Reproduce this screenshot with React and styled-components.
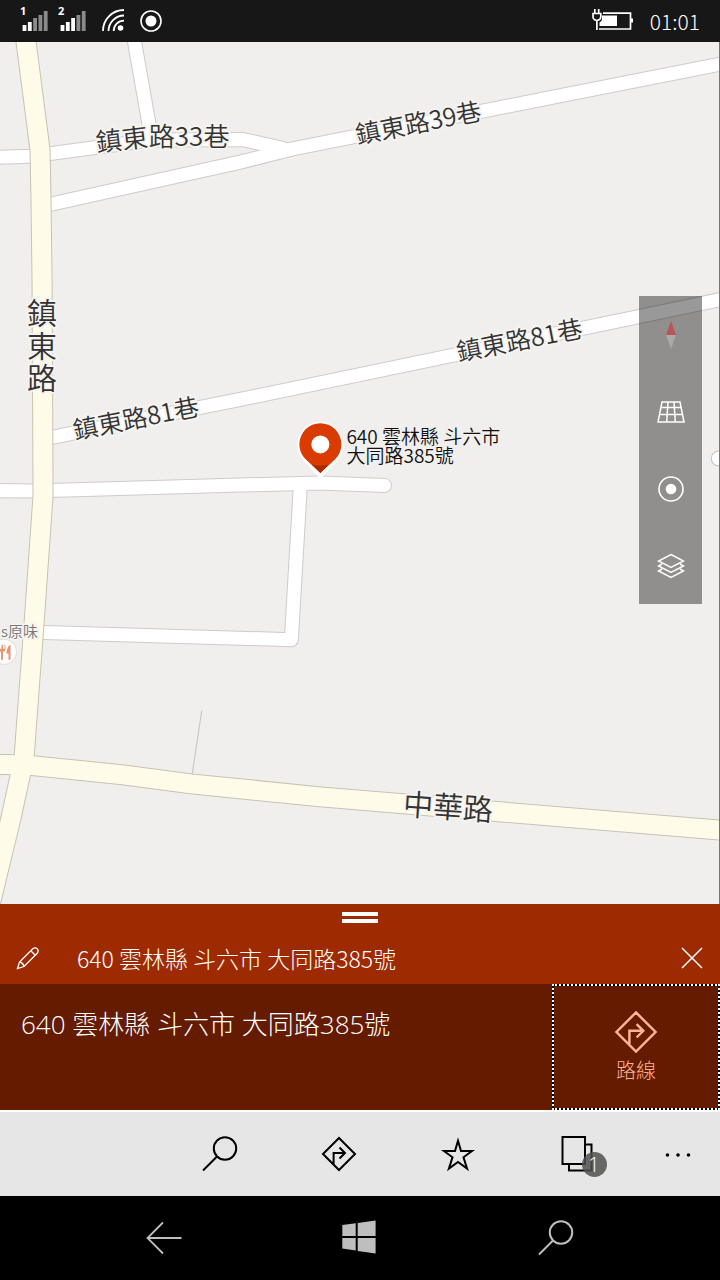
import styled, { createGlobalStyle } from 'styled-components';

const address = '640 雲林縣 斗六市 大同路385號';

const GlobalStyle = createGlobalStyle`
  * {
    box-sizing: border-box;
  }
  body {
    margin: 0;
    font-family: 'Noto Sans CJK TC', 'Noto Sans', sans-serif;
    font-weight: 300;
  }
  button {
    margin: 0;
    padding: 0;
    border: 0;
    background: none;
    color: inherit;
    font: inherit;
    cursor: pointer;
  }
  svg {
    display: block;
  }
`;

const Screen = styled.div`
  display: flex;
  flex-direction: column;
  min-height: 100vh;
  background: #fff;
`;

const StatusBar = styled.header`
  display: flex;
  align-items: center;
  justify-content: space-between;
  height: 42px;
  padding: 0 20px;
  background: #171717;
  color: #fff;
`;
const StatusGroup = styled.div`
  display: flex;
  align-items: center;
  gap: ${({ $gap }) => $gap}px;
`;
const Clock = styled.time`
  font-size: 21px;
  line-height: 24px;
`;
const SignalText = styled.text`
  font: 700 11px 'Open Sans', sans-serif;
  fill: #fff;
`;

const MapArea = styled.main`
  position: relative;
  flex: 1;
  min-height: 640px;
  overflow: hidden;
  border-right: 1px solid #757575;
  background: #f0efed;
`;
const MapCanvas = styled.svg`
  position: absolute;
  inset: 0;
  width: 100%;
  height: 100%;
`;
const RoadLabel = styled.text`
  font-size: ${({ $size }) => $size}px;
  font-weight: 350;
  fill: #333;
  stroke: #f5f4f0;
  stroke-width: 4px;
  stroke-linejoin: round;
  paint-order: stroke;
`;
const PinLabel = styled.text`
  font-size: 19px;
  font-weight: 350;
  fill: #111;
`;
const PlaceLabel = styled.text`
  font-size: 15px;
  font-weight: 350;
  fill: #777;
  stroke: #f5f4f0;
  stroke-width: 3px;
  paint-order: stroke;
`;
const MapTools = styled.div`
  position: absolute;
  top: 254px;
  right: 17px;
  display: flex;
  flex-direction: column;
  width: 63px;
  background: rgba(0, 0, 0, 0.4);
`;
const ToolButton = styled.button`
  display: flex;
  align-items: center;
  justify-content: center;
  height: 77px;
`;

const SearchHeader = styled.section`
  height: 80px;
  background: #9d2a00;
  color: #fff;
`;
const Handle = styled.button`
  display: flex;
  align-items: flex-start;
  justify-content: center;
  width: 100%;
  height: 30px;
  padding-top: 8px;
`;
const HandleBars = styled.span`
  width: 36px;
  height: 11px;
  border: solid #fff;
  border-width: 4px 0;
`;
const QueryRow = styled.div`
  display: flex;
  align-items: center;
  height: 48px;
`;
const RowIcon = styled.button`
  display: flex;
  align-items: center;
  justify-content: center;
  width: 56px;
  height: 48px;
`;
const Query = styled.button`
  flex: 1;
  padding-left: 21px;
  font-size: 23px;
  line-height: 32px;
  text-align: left;
`;

const Detail = styled.section`
  display: flex;
  min-height: 126px;
  background: #641b00;
  color: #fff;
`;
const Address = styled.h1`
  flex: 1;
  margin: 0;
  padding: 21px;
  font-family: 'Open Sans', 'Noto Sans CJK TC', sans-serif;
  font-size: 26px;
  font-weight: 300;
  line-height: 38px;
`;
const RouteButton = styled.button`
  display: flex;
  flex-direction: column;
  align-items: center;
  justify-content: center;
  gap: 2px;
  width: 168px;
  border: 2px dotted #fff;
  background: linear-gradient(#641b00, #641b00) padding-box, #000 border-box;
  color: #ffb294;
  font-size: 20px;
  line-height: 28px;
`;

const AppBar = styled.nav`
  display: flex;
  justify-content: flex-end;
  height: 84px;
  margin-top: 2px;
  background: #e6e6e6;
  color: #000;
`;
const AppBarButton = styled.button`
  display: flex;
  align-items: center;
  justify-content: center;
  width: ${({ $narrow }) => ($narrow ? 84 : 119)}px;
`;
const IconWithBadge = styled.span`
  position: relative;
`;
const Badge = styled.span`
  position: absolute;
  right: -12px;
  bottom: -5px;
  width: 25px;
  height: 25px;
  border-radius: 50%;
  background: rgba(80, 80, 80, 0.85);
  color: #fff;
  font-family: 'Open Sans', sans-serif;
  font-size: 20px;
  font-weight: 300;
  line-height: 26px;
  text-align: center;
`;

const SystemBar = styled.nav`
  display: flex;
  justify-content: center;
  height: 84px;
  background: #000;
  color: #bebebe;
`;
const SystemButton = styled.button`
  display: flex;
  align-items: center;
  justify-content: center;
  width: 196px;
`;

const barHeights = [6, 9, 13, 16, 20];

function Signal({ sim, level }) {
  return (
    <svg width="28" height="36" viewBox="0 0 28 36" fill="#fff">
      <SignalText x="0" y="12">{sim}</SignalText>
      {barHeights.map((h, i) => (
        <rect
          key={h}
          x={2.6 + i * 5.3}
          y={28 - h}
          width="3.8"
          height={h}
          fill={i < level ? '#fff' : '#8b8b8b'}
        />
      ))}
    </svg>
  );
}

function WifiIcon() {
  return (
    <svg width="22" height="24" viewBox="0 0 22 24" fill="none" stroke="#fff" strokeWidth="1.8">
      <path d="M1 22A21 21 0 0 1 22 1M6.500 22A15.500 15.500 0 0 1 22 6.500M11.700 22A10.300 10.300 0 0 1 22 11.700" />
      <circle cx="18.500" cy="19" r="2.800" fill="#fff" stroke="none" />
    </svg>
  );
}

function TargetIcon({ size, dot }) {
  const c = size / 2;
  return (
    <svg width={size} height={size} viewBox={`0 0 ${size} ${size}`}>
      <circle cx={c} cy={c} r={c - 1} fill="none" stroke="#fff" strokeWidth="1.6" />
      <circle cx={c} cy={c} r={dot} fill="#fff" />
    </svg>
  );
}

function BatteryIcon() {
  return (
    <svg width="42" height="24" viewBox="0 0 42 24" fill="none" stroke="#fff" strokeWidth="1.7">
      <path d="M11 4.200H38.500V20H7" />
      <path d="M10 6.500H25V17H7.500V13.500Q10 12 10 10Z" fill="#fff" stroke="none" />
      <path d="M39 9.500H41V13.500H39Z" fill="#fff" stroke="none" />
      <path d="M2.800 0V4M6.700 0V4M1 4.500H8.800V7.500Q8.800 11 4.900 11.500Q1 11 1 7.500ZM4.900 11V21" />
    </svg>
  );
}

function CompassIcon() {
  return (
    <svg width="12" height="30" viewBox="0 0 12 30">
      <path d="M6 1L11 15H1Z" fill="#b85558" />
      <path d="M1 15H11L6 29Z" fill="#aaa9a9" />
    </svg>
  );
}

function TiltIcon() {
  return (
    <svg width="28" height="22" viewBox="0 0 28 22" fill="none" stroke="#fff" strokeWidth="1.5">
      <path d="M5 1H23L27 21H1ZM4 6.500H24M2.800 13.500H25.200M11 1L9.700 21M17 1L18.300 21" />
    </svg>
  );
}

function LayersIcon() {
  return (
    <svg width="28" height="26" viewBox="0 0 28 26" fill="none" stroke="#fff" strokeWidth="1.5">
      <path d="M14 1.500L26.500 8L14 14.500L1.500 8ZM5 11L1.500 13L14 19.500L26.500 13L23 11M5 16L1.500 18L14 24.500L26.500 18L23 16" />
    </svg>
  );
}

function PencilIcon() {
  return (
    <svg width="24" height="24" viewBox="0 0 24 24" fill="none" stroke="#fff" strokeWidth="1.3">
      <path d="M1.500 22.500L3.500 16L16.500 3Q19 .8 21.200 2.800Q23.200 5 21 7.500L8 20.500ZM14.800 4.700L19.300 9.200M3.500 16Q7 16.500 8 20.500" />
    </svg>
  );
}

function CloseIcon() {
  return (
    <svg width="22" height="22" viewBox="0 0 22 22" stroke="#fff" strokeWidth="1.500">
      <path d="M1 1L21 21M21 1L1 21" />
    </svg>
  );
}

function DirectionsIcon({ size = 36 }) {
  return (
    <svg width={size} height={size} viewBox="0 0 36 36" fill="none" stroke="currentColor" strokeWidth="2">
      <path d="M18 2L34 18L18 34L2 18ZM12.600 28V17H24M18.500 11.500L24 17L18.500 22.500" />
    </svg>
  );
}

function SearchIcon() {
  return (
    <svg width="36" height="36" viewBox="0 0 36 36" fill="none" stroke="currentColor" strokeWidth="2">
      <circle cx="23" cy="12.500" r="11.200" />
      <path d="M15 20.500L1 34.500" />
    </svg>
  );
}

function StarIcon() {
  return (
    <svg
      width="36"
      height="36"
      viewBox="0 0 36 36"
      fill="none"
      stroke="currentColor"
      strokeWidth="2"
      strokeMiterlimit="10"
    >
      <path d="M18 4.800L21 15H32L23.500 21.300L27.100 32.600L18 26L8.900 32.600L12.500 21.300L4 15H15Z" />
    </svg>
  );
}

function PagesIcon() {
  return (
    <svg width="36" height="36" viewBox="0 0 36 36" fill="none" stroke="currentColor" strokeWidth="2">
      <path d="M3.500 1H26V28H3.500ZM26 8.500H32.500V34.500H10V28" />
    </svg>
  );
}

function MoreIcon() {
  return (
    <svg width="26" height="6" viewBox="0 0 26 6" fill="currentColor">
      <circle cx="2.500" cy="4" r="1.800" />
      <circle cx="13" cy="4" r="1.800" />
      <circle cx="23.500" cy="4" r="1.800" />
    </svg>
  );
}

function BackIcon() {
  return (
    <svg width="36" height="36" viewBox="0 0 36 36" fill="none" stroke="currentColor" strokeWidth="1.800">
      <path d="M35.500 18H2M17 2.500L1.500 18L17 33.500" />
    </svg>
  );
}

function WindowsIcon() {
  return (
    <svg width="36" height="36" viewBox="0 0 36 36" fill="currentColor">
      <path d="M.3 5L13.700 3.300V16H.3ZM15.700 2.900L33.600 .4V16H15.700ZM.3 18H13.700V30.500L.3 28.500ZM15.700 18H33.600V33.400L15.700 31Z" />
    </svg>
  );
}

const lanes = [
  'M-8 115.500L30 114L50 111.500L150 98L243 97.500L283 106.500',
  'M133 -8L149 83L152 98',
  'M42 164L240 120L291 107L560 53.500L730 20',
  'M42 397L240 357L620 278L730 255',
  'M-8 448L33 448.500L240 442.500L320 440.500L384 443',
  'M300 443L291 597L36 589.500',
];
const mainRoads = [
  'M25 -8L40 108L41 161L42 238L43 453L34 581L24 715L11 775L-12 870',
  'M-8 721.500L25 722L123 732L191 741L320 754L730 788',
];

function StreetMap() {
  return (
    <MapCanvas viewBox="0 0 720 861" preserveAspectRatio="xMinYMin slice" aria-label="地圖">
      <g fill="none" strokeLinejoin="round" strokeLinecap="round">
        <path d="M201.500 668L192 731" stroke="#c4c1bf" />
        {lanes.map((d) => (
          <path key={d} d={d} stroke="#d0cacb" strokeWidth="15" />
        ))}
        <circle cx="718" cy="416" r="7.500" fill="#fff" stroke="#c4c0c0" />
        {lanes.map((d) => (
          <path key={d} d={d} stroke="#fff" strokeWidth="13" />
        ))}
        {mainRoads.map((d) => (
          <path key={d} d={d} stroke="#c8c2b4" strokeWidth="21" />
        ))}
        {mainRoads.map((d) => (
          <path key={d} d={d} stroke="#fffbe9" strokeWidth="19" />
        ))}
        <path id="lane33" d="M97 110L148 104L260 104" />
      </g>

      <RoadLabel $size={26}>
        <textPath href="#lane33">鎮東路33巷</textPath>
      </RoadLabel>
      <RoadLabel $size={25} transform="translate(357 102) rotate(-11)">鎮東路39巷</RoadLabel>
      <RoadLabel $size={25} transform="translate(458 319) rotate(-11)">鎮東路81巷</RoadLabel>
      <RoadLabel $size={25} transform="translate(75 397) rotate(-11)">鎮東路81巷</RoadLabel>
      <RoadLabel $size={30} transform="translate(402 772) rotate(4)">中華路</RoadLabel>
      <RoadLabel $size={30}>
        <tspan x="27" y="282">鎮</tspan>
        <tspan x="27" y="315">東</tspan>
        <tspan x="27" y="347">路</tspan>
      </RoadLabel>

      <PlaceLabel x="1" y="594">s原味</PlaceLabel>
      <circle cx="4" cy="609" r="12.500" fill="#fff" stroke="#e2e0de" />
      <path
        d="M-1 602V607Q0 609 1 609V617H3V609Q5 609 5.500 607V602H4.500V606H3V602H1.500V606H0V602ZM10.500 602V617H8.500V611H6.500Q6.500 604 10.500 602Z"
        fill="#e5966f"
      />

      <path
        d="M320 435L304 417.500A22 22 0 1 1 336 417.500Z"
        fill="#fff"
        stroke="#fff"
        strokeWidth="2"
      />
      <path d="M320 430.500L305 416.500A21 21 0 1 1 335 416.500Z" fill="#da3b01" />
      <path d="M320 430.500L311.500 422Q320 424 328.500 422Z" fill="#a82c00" />
      <circle cx="320" cy="402" r="9" fill="#fff" />
      <PinLabel>
        <tspan x="346" y="402">640 雲林縣 斗六市</tspan>
        <tspan x="346" y="421">大同路385號</tspan>
      </PinLabel>
    </MapCanvas>
  );
}

function App() {
  return (
    <Screen>
      <GlobalStyle />
      <StatusBar>
        <StatusGroup $gap={16}>
          <StatusGroup $gap={10}>
            <Signal sim="1" level={2} />
            <Signal sim="2" level={3} />
          </StatusGroup>
          <WifiIcon />
          <TargetIcon size={22} dot={5.5} />
        </StatusGroup>
        <StatusGroup $gap={16}>
          <BatteryIcon />
          <Clock>01:01</Clock>
        </StatusGroup>
      </StatusBar>

      <MapArea>
        <StreetMap />
        <MapTools>
          <ToolButton aria-label="指北針">
            <CompassIcon />
          </ToolButton>
          <ToolButton aria-label="傾斜">
            <TiltIcon />
          </ToolButton>
          <ToolButton aria-label="我的位置">
            <TargetIcon size={26} dot={5.3} />
          </ToolButton>
          <ToolButton aria-label="圖層">
            <LayersIcon />
          </ToolButton>
        </MapTools>
      </MapArea>

      <SearchHeader>
        <Handle aria-label="展開">
          <HandleBars />
        </Handle>
        <QueryRow>
          <RowIcon aria-label="編輯">
            <PencilIcon />
          </RowIcon>
          <Query>{address}</Query>
          <RowIcon aria-label="關閉">
            <CloseIcon />
          </RowIcon>
        </QueryRow>
      </SearchHeader>

      <Detail>
        <Address>{address}</Address>
        <RouteButton>
          <DirectionsIcon size={44} />
          路線
        </RouteButton>
      </Detail>

      <AppBar>
        <AppBarButton aria-label="搜尋">
          <SearchIcon />
        </AppBarButton>
        <AppBarButton aria-label="路線規劃">
          <DirectionsIcon />
        </AppBarButton>
        <AppBarButton aria-label="我的最愛">
          <StarIcon />
        </AppBarButton>
        <AppBarButton aria-label="分頁">
          <IconWithBadge>
            <PagesIcon />
            <Badge>1</Badge>
          </IconWithBadge>
        </AppBarButton>
        <AppBarButton $narrow aria-label="更多">
          <MoreIcon />
        </AppBarButton>
      </AppBar>

      <SystemBar>
        <SystemButton aria-label="返回">
          <BackIcon />
        </SystemButton>
        <SystemButton aria-label="開始">
          <WindowsIcon />
        </SystemButton>
        <SystemButton aria-label="系統搜尋">
          <SearchIcon />
        </SystemButton>
      </SystemBar>
    </Screen>
  );
}

export default App;
